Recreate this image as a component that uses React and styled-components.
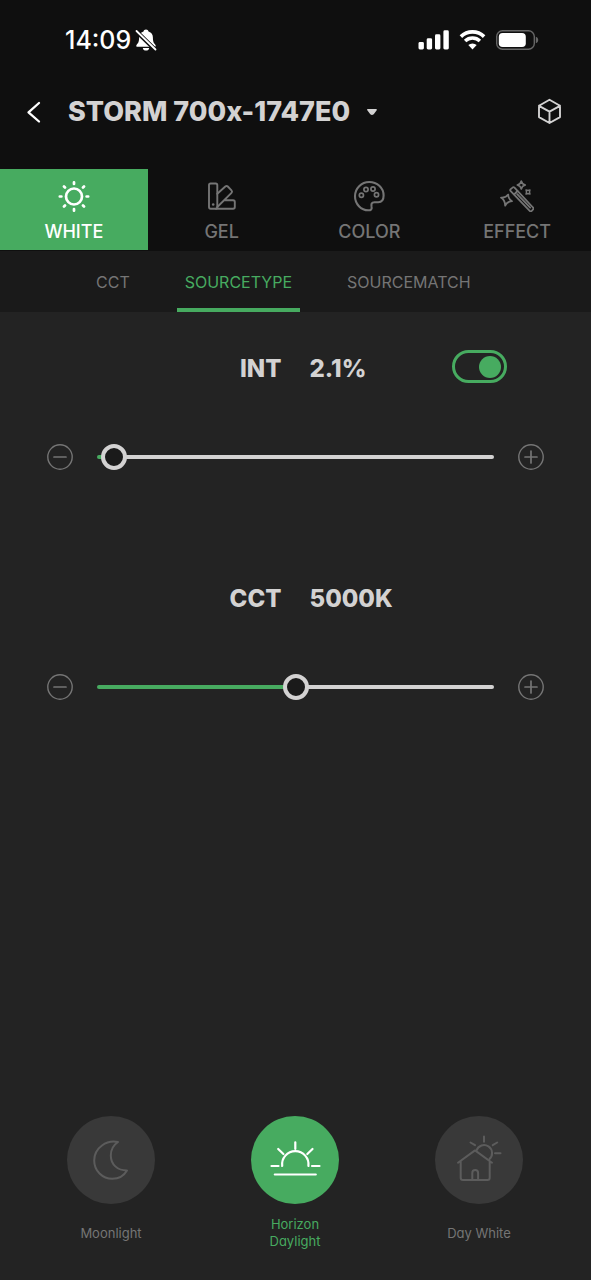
import React, { useState } from "react";
import styled, { createGlobalStyle, ThemeProvider } from "styled-components";

const theme = {
  colors: {
    bar: "#0f0f0f",
    subBar: "#1a1a1a",
    page: "#232323",
    green: "#47ab60",
    text: "#d3d2d2",
    muted: "#757575",
    disc: "#393939",
    discLine: "#5c5c5c",
  },
};

const GlobalStyle = createGlobalStyle`
  * {
    box-sizing: border-box;
  }

  body {
    margin: 0;
    background: #232323;
    font-family: Inter, "Liberation Sans", sans-serif;
    -webkit-font-smoothing: antialiased;
  }

  button {
    margin: 0;
    padding: 0;
    border: 0;
    background: none;
    color: inherit;
    font: inherit;
    cursor: pointer;
  }

  svg {
    display: block;
    flex: none;
  }
`;

const Screen = styled.div`
  display: flex;
  flex-direction: column;
  min-height: 100vh;
  background: ${({ theme }) => theme.colors.page};
  color: ${({ theme }) => theme.colors.text};
`;

const TopBar = styled.header`
  background: ${({ theme }) => theme.colors.bar};
  padding-bottom: 1px;
`;

const StatusBar = styled.div`
  display: flex;
  align-items: center;
  justify-content: space-between;
  height: 80px;
  padding: 0 52px 0 65px;
  color: #fff;
`;

const StatusGroup = styled.div`
  display: flex;
  align-items: center;
  gap: ${({ $gap }) => $gap}px;
`;

const Clock = styled.span`
  font-size: 25px;
  font-weight: 500;
  line-height: 32px;
`;

const TitleBar = styled.div`
  display: flex;
  align-items: center;
  height: 64px;
  margin-bottom: 25px;
  padding: 0 28px 0 24px;
`;

const BackButton = styled.button`
  width: 44px;
  color: #fff;
`;

const DeviceButton = styled.button`
  display: flex;
  align-items: center;
  gap: 16px;
`;

const DeviceName = styled.h1`
  margin: 0;
  font-size: 27px;
  font-weight: 800;
  line-height: 32px;
  white-space: nowrap;
`;

const CubeButton = styled.button`
  margin-left: auto;
`;

const ModeTabs = styled.nav`
  display: grid;
  grid-template-columns: repeat(4, 1fr);
`;

const ModeTab = styled.button`
  display: flex;
  flex-direction: column;
  align-items: center;
  gap: 8px;
  padding: 11px 0 6px;
  font-size: 18px;
  font-weight: 500;
  line-height: 24px;
  background: ${({ $active, theme }) => ($active ? theme.colors.green : "none")};
  color: ${({ $active, theme }) => ($active ? "#fff" : theme.colors.muted)};
`;

const SubTabs = styled.nav`
  display: flex;
  gap: 39px;
  height: 61px;
  padding-left: 88px;
  background: ${({ theme }) => theme.colors.subBar};
`;

const SubTab = styled.button`
  padding: 4px 8px 0;
  border-bottom: 4px solid
    ${({ $active, theme }) => ($active ? theme.colors.green : "transparent")};
  color: ${({ $active, theme }) => ($active ? theme.colors.green : theme.colors.muted)};
  font-size: 16px;
  font-weight: 400;
`;

const Controls = styled.main`
  display: flex;
  flex: 1;
  flex-direction: column;
  gap: 110px;
  padding: 38px 47px 60px;
`;

const Control = styled.section`
  display: flex;
  flex-direction: column;
  gap: 61px;
`;

const Reading = styled.div`
  display: grid;
  grid-template-columns: 1fr 1fr;
  align-items: center;
  column-gap: 28px;
  height: 33px;
  font-size: 24px;
  font-weight: 800;
`;

const ReadingLabel = styled.label`
  padding-top: 3px;
  text-align: right;
`;

const ReadingValue = styled.div`
  display: flex;
  align-items: center;
  justify-content: space-between;
  padding-right: 37px;
`;

const Amount = styled.output`
  padding-top: 3px;
`;

const Toggle = styled.input`
  display: flex;
  align-items: center;
  justify-content: ${({ checked }) => (checked ? "flex-end" : "flex-start")};
  width: 55px;
  height: 33px;
  margin: 0;
  padding: 0 3px;
  border: 3px solid ${({ theme }) => theme.colors.green};
  border-radius: 17px;
  appearance: none;
  cursor: pointer;

  &::before {
    content: "";
    width: 22px;
    height: 22px;
    border-radius: 50%;
    background: ${({ theme }) => theme.colors.green};
  }
`;

const SliderRow = styled.div`
  display: flex;
  align-items: center;
  gap: 24px;
  height: 26px;
`;

const StepButton = styled.button`
  color: ${({ theme }) => theme.colors.muted};
`;

const Range = styled.input`
  flex: 1;
  min-width: 0;
  height: 26px;
  margin: 0;
  background: none;
  appearance: none;
  cursor: pointer;

  &::-webkit-slider-runnable-track {
    height: 4px;
    border-radius: 2px;
    background: linear-gradient(
      to right,
      ${({ theme }) => theme.colors.green} var(--fill),
      ${({ theme }) => theme.colors.text} var(--fill)
    );
  }

  &::-webkit-slider-thumb {
    width: 26px;
    height: 26px;
    margin-top: -11px;
    border: 4px solid ${({ theme }) => theme.colors.text};
    border-radius: 50%;
    background: ${({ theme }) => theme.colors.subBar};
    appearance: none;
  }
`;

const Presets = styled.footer`
  display: flex;
  justify-content: space-between;
  padding: 0 68px 30px 67px;
`;

const Preset = styled.button`
  display: flex;
  flex-direction: column;
  align-items: center;
  gap: 12px;
  width: 88px;
  color: ${({ $active, theme }) => ($active ? theme.colors.green : theme.colors.muted)};
`;

const Disc = styled.span`
  border-radius: 50%;
  background: ${({ $active, theme }) => ($active ? theme.colors.green : theme.colors.disc)};
  color: ${({ $active, theme }) => ($active ? "#fff" : theme.colors.discLine)};
`;

const PresetName = styled.span`
  display: flex;
  align-items: center;
  height: 34px;
  font-size: 13px;
  line-height: 17px;
  font-feature-settings: "cv11";
`;

function Icon({ width, height, stroke = 2, children }) {
  return (
    <svg
      width={width}
      height={height}
      viewBox={`0 0 ${width} ${height}`}
      fill="none"
      stroke="currentColor"
      strokeWidth={stroke}
      strokeLinecap="round"
      strokeLinejoin="round"
      aria-hidden="true"
    >
      {children}
    </svg>
  );
}

const BellOff = () => (
  <Icon width={22} height={24}>
    <path
      d="M11 1.5c-1.4 0-2.3.8-2.5 1.9C5.4 4.3 4.100 6.700 4.100 9.500c0 4.500-1 5.600-2.400 7.200-.8 1-.5 2.100.9 2.100h16.800c1.400 0 1.700-1.100.9-2.100-1.400-1.600-2.400-2.700-2.400-7.200 0-2.800-1.300-5.200-4.400-6.100-.2-1.100-1.100-1.900-2.500-1.900ZM7.800 19.900h6.400c-.3 1.700-1.500 2.700-3.200 2.700s-2.900-1-3.200-2.700Z"
      fill="currentColor"
      stroke="none"
    />
    <path d="M1.500 3.500 20.500 22" stroke="#0f0f0f" strokeWidth="4.2" />
    <path d="M1.500 3 20.500 21.500" strokeWidth="1.8" />
  </Icon>
);

const Signal = () => (
  <Icon width={31} height={20}>
    <g fill="currentColor" stroke="none">
      <rect x="0.5" y="12" width="5.4" height="7.5" rx="1.4" />
      <rect x="8.700" y="8.3" width="5.4" height="11.2" rx="1.4" />
      <rect x="17" y="4.3" width="5.4" height="15.2" rx="1.4" />
      <rect x="25.4" y="0.3" width="5.4" height="19.2" rx="1.4" />
    </g>
  </Icon>
);

const Wifi = () => (
  <Icon width={27} height={20}>
    <path d="M1.9 6.600a16.600 16.600 0 0 1 23.200 0" strokeWidth="3.6" strokeLinecap="butt" />
    <path d="M6.100 11a10.600 10.600 0 0 1 14.800 0" strokeWidth="3.4" strokeLinecap="butt" />
    <path d="M13.500 19.400 9.300 15.100a6.200 6.200 0 0 1 8.400 0Z" fill="currentColor" stroke="none" />
  </Icon>
);

const Battery = () => (
  <Icon width={43} height={20}>
    <rect x="0.7" y="0.7" width="37.6" height="18.6" rx="5.8" stroke="#666" strokeWidth="1.4" />
    <rect x="2.8" y="2.9" width="27" height="14.2" rx="3.8" fill="currentColor" stroke="none" />
    <path d="M39.8 6.800c1.600.5 2.400 1.700 2.400 3.200s-.8 2.700-2.400 3.200Z" fill="#666" stroke="none" />
  </Icon>
);

const ChevronLeft = () => (
  <Icon width={20} height={24}>
    <path d="M15 3 4.500 12.300 15 21.500" strokeWidth="2.3" />
  </Icon>
);

const Caret = () => (
  <Icon width={12} height={8}>
    <path d="M2 1.800h8L7 5.600q-1 1-2 0Z" fill="currentColor" strokeWidth="1.8" />
  </Icon>
);

const Cube = () => (
  <Icon width={28} height={28} stroke={1.9}>
    <path d="M14.500 1.800 25 7.800v11.300L14.500 25 4 19.100V7.800ZM4 7.800 14.500 13.600 25 7.800M14.500 13.600V25" />
  </Icon>
);

const Sun = () => (
  <Icon width={32} height={32} stroke={2.7}>
    <circle cx="16" cy="16.500" r="8" />
    <path d="M16 2.300v1.600M16 29.100v1.600M1.800 16.500h1.600M28.600 16.500h1.600M6 6.500l1 1M25 25.500l1 1M26 6.500l-1 1M7 25.500l-1 1" />
  </Icon>
);

const Swatches = () => (
  <Icon width={30} height={32} stroke={1.9}>
    <rect x="2" y="3.5" width="8.3" height="25.2" rx="1.6" />
    <path d="M10.300 13.800 18.300 6.500q1.300-1.200 2.500 0l3.700 3.900q1.200 1.300 0 2.500L10.300 27M18 20.300h8.100q1.700 0 1.700 1.700v5q0 1.700-1.700 1.700H9" />
    <circle cx="6.2" cy="24.5" r="1.3" fill="currentColor" stroke="none" />
  </Icon>
);

const Palette = () => (
  <Icon width={32} height={32} stroke={2.1}>
    <path d="M16.300 2C8.300 2 2 8.300 2 16.200 2 24 8.100 30.300 15.300 30.300c2.800 0 3.700-1.200 3.300-3.300-.5-3-.2-4.700 2.900-4.700h3.700c3.500 0 5.400-2.500 5.400-6.700C30.600 7.700 24 2 16.300 2Z" />
    <g strokeWidth="1.7">
      <circle cx="8.4" cy="15.2" r="2.1" />
      <circle cx="13" cy="9.5" r="2.1" />
      <circle cx="20" cy="9" r="2.1" />
      <circle cx="23.5" cy="14.7" r="2.1" />
    </g>
  </Icon>
);

const Wand = () => (
  <Icon width={34} height={32} stroke={1.800}>
    <path d="M10.700 11.200q-1-1 0-2l1.800-1.600q1-1 2 0L33 27.500q1 1 0 2l-1.300 1.400q-1 1-2 0Z" />
    <path d="M14.200 14.400 17.500 11M17.200 14.200l13 13.400" />
    <path d="M1 17.600Q6 18 8.200 14.600 8.300 19.200 12 21.200 7 21.600 5.200 25.600 5 20 1 17.600Z" />
    <path d="M21.300 1Q22 4.200 25.300 5 22 5.700 21.300 9 20.600 5.700 17.300 5 20.600 4.200 21.300 1Z" strokeWidth="1.6" />
    <path d="M26 9.900 28 10.500 30 9.900 29.500 12l.5 2.100-2-.6-2 .6.500-2.100Z" strokeWidth="1.4" />
  </Icon>
);

const Minus = () => (
  <Icon width={26} height={26} stroke={1.4}>
    <circle cx="13" cy="13" r="12.2" />
    <path d="M7 13h12" strokeWidth="1.7" />
  </Icon>
);

const Plus = () => (
  <Icon width={26} height={26} stroke={1.4}>
    <circle cx="13" cy="13" r="12.2" />
    <path d="M7 13h12M13 7v12" strokeWidth="1.7" />
  </Icon>
);

const Moonlight = () => (
  <Icon width={88} height={88} stroke={2}>
    <path d="M51 26C40 23.500 27.200 31.500 27.200 44.500c0 10.300 8.200 18.300 18.200 18.300 6 0 11.600-3.200 14.600-8.300C50.500 54.500 43.800 48.500 43.800 39.500 43.800 34 46.500 29 51 26Z" />
  </Icon>
);

const Horizon = () => (
  <Icon width={88} height={88} stroke={2.2}>
    <path d="M31.200 50a13.200 13.200 0 1 1 26.200 0M20.500 50h7M61 50h7.500M44.300 26.300v6.700M27.200 33l5.200 5M61.500 33l-5.200 5M23.800 58.500h41" />
  </Icon>
);

const DayWhite = () => (
  <Icon width={88} height={88} stroke={2}>
    <path d="M23 46.700 40 34.400 57 46.700M25.700 45.500v16.300q0 2.200 2.200 2.200h24.600q2.200 0 2.200-2.200V45.500M37.300 64v-7a2.900 2.900 0 0 1 5.800 0v7" />
    <path d="M41.500 34.500a8 8 0 1 1 13 8.500M49 20.500v5.200M35.500 26.500l4.500 2.700M62.200 26.500l-4.500 2.700M60 37.300h5.500" />
  </Icon>
);

const modes = [
  { name: "WHITE", icon: Sun },
  { name: "GEL", icon: Swatches },
  { name: "COLOR", icon: Palette },
  { name: "EFFECT", icon: Wand },
];

const sources = ["CCT", "SOURCETYPE", "SOURCEMATCH"];

const presets = [
  { name: "Moonlight", icon: Moonlight },
  { name: "Horizon Daylight", icon: Horizon },
  { name: "Day White", icon: DayWhite },
];

function SliderControl({ id, label, value, unit, min, max, step, onChange, children }) {
  const fill = ((value - min) / (max - min)) * 100;
  const move = (next) => onChange(Math.min(max, Math.max(min, Number(next.toFixed(1)))));

  return (
    <Control>
      <Reading>
        <ReadingLabel htmlFor={id}>{label}</ReadingLabel>
        <ReadingValue>
          <Amount htmlFor={id}>
            {value}
            {unit}
          </Amount>
          {children}
        </ReadingValue>
      </Reading>
      <SliderRow>
        <StepButton aria-label={`Decrease ${label}`} onClick={() => move(value - step)}>
          <Minus />
        </StepButton>
        <Range
          id={id}
          type="range"
          min={min}
          max={max}
          step={step}
          value={value}
          onChange={(e) => move(Number(e.target.value))}
          style={{ "--fill": `max(${fill}%, 8px)` }}
        />
        <StepButton aria-label={`Increase ${label}`} onClick={() => move(value + step)}>
          <Plus />
        </StepButton>
      </SliderRow>
    </Control>
  );
}

export default function App() {
  const [mode, setMode] = useState("WHITE");
  const [source, setSource] = useState("SOURCETYPE");
  const [preset, setPreset] = useState("Horizon Daylight");
  const [intensity, setIntensity] = useState(2.1);
  const [cct, setCct] = useState(5000);
  const [on, setOn] = useState(true);

  return (
    <ThemeProvider theme={theme}>
      <GlobalStyle />
      <Screen>
        <TopBar>
          <StatusBar>
            <StatusGroup $gap={4}>
              <Clock>14:09</Clock>
              <BellOff />
            </StatusGroup>
            <StatusGroup $gap={10}>
              <Signal />
              <Wifi />
              <Battery />
            </StatusGroup>
          </StatusBar>
          <TitleBar>
            <BackButton aria-label="Back">
              <ChevronLeft />
            </BackButton>
            <DeviceButton>
              <DeviceName>STORM 700x-1747E0</DeviceName>
              <Caret />
            </DeviceButton>
            <CubeButton aria-label="3D view">
              <Cube />
            </CubeButton>
          </TitleBar>
          <ModeTabs>
            {modes.map(({ name, icon: Glyph }) => (
              <ModeTab key={name} $active={name === mode} onClick={() => setMode(name)}>
                <Glyph />
                {name}
              </ModeTab>
            ))}
          </ModeTabs>
        </TopBar>

        <SubTabs>
          {sources.map((name) => (
            <SubTab key={name} $active={name === source} onClick={() => setSource(name)}>
              {name}
            </SubTab>
          ))}
        </SubTabs>

        <Controls>
          <SliderControl
            id="intensity"
            label="INT"
            unit="%"
            min={1}
            max={100}
            step={0.1}
            value={intensity}
            onChange={setIntensity}
          >
            <Toggle
              type="checkbox"
              aria-label="Light on"
              checked={on}
              onChange={(e) => setOn(e.target.checked)}
            />
          </SliderControl>
          <SliderControl
            id="cct"
            label="CCT"
            unit="K"
            min={2000}
            max={8000}
            step={50}
            value={cct}
            onChange={setCct}
          />
        </Controls>

        <Presets>
          {presets.map(({ name, icon: Glyph }) => (
            <Preset key={name} onClick={() => setPreset(name)} $active={name === preset}>
              <Disc $active={name === preset}>
                <Glyph />
              </Disc>
              <PresetName>{name}</PresetName>
            </Preset>
          ))}
        </Presets>
      </Screen>
    </ThemeProvider>
  );
}
